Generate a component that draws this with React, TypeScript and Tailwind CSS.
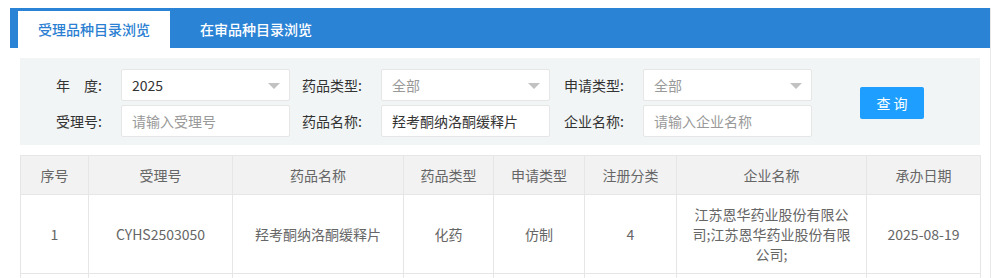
import React from "react";

// --- Data ---
const columns = [
  { title: "序号", width: 68 },
  { title: "受理号", width: 144 },
  { title: "药品名称", width: 171 },
  { title: "药品类型", width: 90 },
  { title: "申请类型", width: 91 },
  { title: "注册分类", width: 92 },
  { title: "企业名称", width: 190 },
  { title: "承办日期", width: 114 },
];

const rows = [
  [
    "1",
    "CYHS2503050",
    "羟考酮纳洛酮缓释片",
    "化药",
    "仿制",
    "4",
    "江苏恩华药业股份有限公司;江苏恩华药业股份有限公司;",
    "2025-08-19",
  ],
];

const FONT = "font-['Microsoft_YaHei','Noto_Sans_CJK_SC',sans-serif]";

// --- Small form pieces ---
const Label = ({ children, w }: { children: React.ReactNode; w: string }) => (
  <div className={`${w} shrink-0 pr-[19px] text-right text-sm text-[#333] leading-8`}>{children}</div>
);

const Select = ({ value, placeholder }: { value?: string; placeholder?: string }) => (
  <div className="relative w-[169px] h-8 shrink-0 rounded-[2px] border border-[#e6e6e6] bg-white pl-[10px] text-sm leading-[30px]">
    {value ? <span className="text-[#333]">{value}</span> : <span className="text-[#999]">{placeholder}</span>}
    <span className="absolute right-[9px] top-[13px] h-0 w-0 border-x-[6px] border-t-[6px] border-x-transparent border-t-[#c2c2c2]" />
  </div>
);

const Input = ({ value, placeholder }: { value?: string; placeholder?: string }) => (
  <div className="w-[169px] h-8 shrink-0 rounded-[2px] border border-[#e6e6e6] bg-white pl-[10px] text-sm leading-[30px]">
    {value ? <span className="text-[#333]">{value}</span> : <span className="text-[#999]">{placeholder}</span>}
  </div>
);

// --- Main Component ---
export default function App() {
  return (
    <div className={`w-[1001px] h-[278px] overflow-hidden bg-white pt-2 pl-[10px] ${FONT}`}>
      <div className="w-[981px] h-full border-r border-[#e8e8e8] bg-white">
        {/* Tabs */}
        <div className="flex h-10 items-end bg-[#2b83d6] pl-2">
          <div className="h-[37px] px-5 bg-white text-sm font-medium text-[#2b7fd2] leading-[37px]">受理品种目录浏览</div>
          <div className="ml-[10px] h-[37px] px-5 text-sm font-medium text-white leading-[37px]">在审品种目录浏览</div>
        </div>

        {/* Filters */}
        <div className="mx-[10px] mt-[10px] flex items-center bg-[#f2f5f5] pt-[11px] pb-2">
          <div className="flex flex-col gap-1">
            <div className="flex">
              <Label w="w-[101px]">年&emsp;度:</Label>
              <Select value="2025" />
              <Label w="w-[91px]">药品类型:</Label>
              <Select placeholder="全部" />
              <Label w="w-[93px]">申请类型:</Label>
              <Select placeholder="全部" />
            </div>
            <div className="flex">
              <Label w="w-[101px]">受理号:</Label>
              <Input placeholder="请输入受理号" />
              <Label w="w-[91px]">药品名称:</Label>
              <Input value="羟考酮纳洛酮缓释片" />
              <Label w="w-[93px]">企业名称:</Label>
              <Input placeholder="请输入企业名称" />
            </div>
          </div>
          <button className="ml-12 h-8 w-16 rounded-[2px] bg-[#1e9fff] text-sm text-white">查 询</button>
        </div>

        {/* Table */}
        <table className="mx-[10px] mt-[10px] w-[960px] table-fixed border-collapse text-sm text-[#666]">
          <colgroup>
            {columns.map((c) => (
              <col key={c.title} style={{ width: c.width }} />
            ))}
          </colgroup>
          <thead>
            <tr className="bg-[#f2f2f2]">
              {columns.map((c) => (
                <th key={c.title} className="border border-[#e6e6e6] px-[15px] py-[9px] font-normal leading-5">
                  {c.title}
                </th>
              ))}
            </tr>
          </thead>
          <tbody>
            {rows.map((r, i) => (
              <tr key={i}>
                {r.map((cell, j) => (
                  <td key={j} className="border border-[#e6e6e6] px-[15px] py-[9px] text-center leading-5 break-all">
                    {cell}
                  </td>
                ))}
              </tr>
            ))}
            <tr>
              {columns.map((c) => (
                <td key={c.title} className="border border-[#e6e6e6] px-[15px] py-[9px] leading-5">&nbsp;</td>
              ))}
            </tr>
          </tbody>
        </table>
      </div>
    </div>
  );
}
